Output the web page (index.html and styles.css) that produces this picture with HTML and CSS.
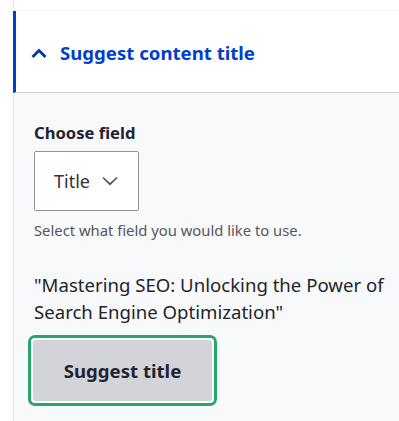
FILE: index.html
```html
<!DOCTYPE html>
<html lang="en">
<head>
    <meta charset="UTF-8">
    <meta name="viewport" content="width=device-width, initial-scale=1.0">
    <title>Suggest content title</title>
    <link rel="stylesheet" href="styles.css">
</head>
<body>
    <div class="sidebar">
        <div class="details">
            <div class="summary">
                <svg class="chevron-up" width="16" height="10" viewBox="0 0 16 10">
                    <path d="M1.5 9 L8 2.5 L14.5 9" fill="none" stroke="#0036b1" stroke-width="2.8"/>
                </svg>
                <span class="summary-title">Suggest content title</span>
            </div>
            <div class="details-body">
                <label class="field-label">Choose field</label>
                <div class="select">
                    <span>Title</span>
                    <svg width="16" height="10" viewBox="0 0 16 10">
                        <path d="M1 1.5 L8 8.2 L15 1.5" fill="none" stroke="#545560" stroke-width="1.7"/>
                    </svg>
                </div>
                <div class="description">Select what field you would like to use.</div>
                <p class="suggestion">"Mastering SEO: Unlocking the Power of Search Engine Optimization"</p>
                <div class="focus-ring">
                    <button class="button">Suggest title</button>
                </div>
            </div>
        </div>
    </div>
</body>
</html>
```

FILE: styles.css
```css
* {
    box-sizing: border-box;
}

body {
    margin: 0;
    background-color: #ffffff;
    font-family: "Noto Sans", "Open Sans", sans-serif;
    color: #222330;
}

.sidebar {
    margin-left: 13px;
    border-left: 1px solid #e4e5ea;
    padding-top: 10px;
    min-height: 421px;
    background-color: #ffffff;
}

.details {
    border-top: 1px solid #f2f3f5;
}

.summary {
    display: flex;
    align-items: center;
    height: 82px;
    margin-left: -1px;
    padding-left: 15px;
    padding-top: 2px;
    background-color: #ffffff;
    border-left: 3px solid #003ecc;
    border-bottom: 1px solid #cfd0d6;
}

.chevron-up {
    margin-right: 13px;
}

.summary-title {
    color: #003ecc;
    font-size: 18.6px;
    font-weight: 700;
}

.details-body {
    min-height: 328px;
    padding: 29px 10px 20px 20px;
    background-color: #f8f9fb;
}

.field-label {
    display: block;
    font-size: 16.6px;
    font-weight: 700;
    line-height: 22px;
    margin-bottom: 7px;
}

.select {
    display: inline-flex;
    align-items: center;
    gap: 12px;
    width: 105px;
    height: 60px;
    padding-left: 19px;
    background-color: #ffffff;
    border: 1px solid #8e929c;
    border-radius: 2px;
    font-size: 18px;
    color: #333;
}

.description {
    margin-top: 9px;
    font-size: 14.8px;
    color: #55565b;
}

.suggestion {
    margin: 31px 0 10px;
    font-size: 18.6px;
    line-height: 27px;
    color: #232429;
}

.focus-ring {
    display: inline-block;
    margin-left: -6px;
    padding: 2px;
    border: 3px solid #26a769;
    border-radius: 7px;
    background-color: #ffffff;
}

.button {
    display: block;
    width: 179px;
    height: 61px;
    border: none;
    border-radius: 3px;
    background-color: #d3d4d9;
    color: #222330;
    font-family: inherit;
    font-size: 18.6px;
    font-weight: 700;
}
```
